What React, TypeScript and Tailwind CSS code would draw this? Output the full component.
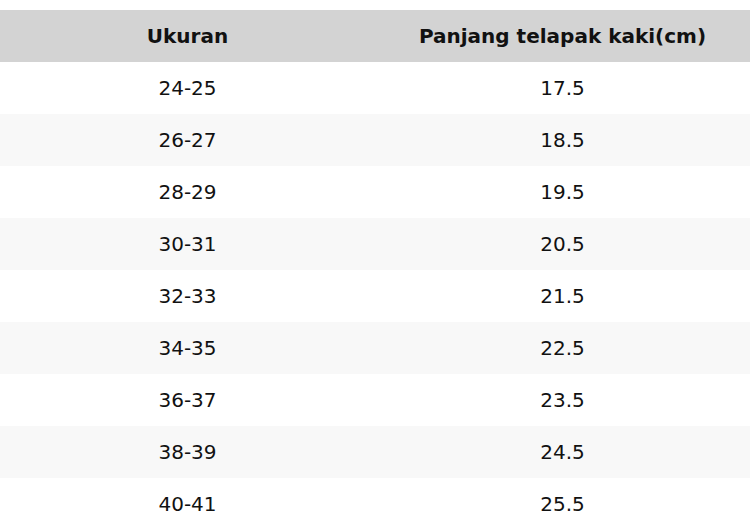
const rows = [
  ["24-25", "17.5"],
  ["26-27", "18.5"],
  ["28-29", "19.5"],
  ["30-31", "20.5"],
  ["32-33", "21.5"],
  ["34-35", "22.5"],
  ["36-37", "23.5"],
  ["38-39", "24.5"],
  ["40-41", "25.5"],
];

export default function App() {
  return (
    <div className="bg-white pt-[10px] text-[20px] text-[#111] [font-family:'DejaVu_Sans',sans-serif]">
      <table className="w-full border-collapse">
        <thead>
          <tr className="bg-[#d3d3d3]">
            <th className="h-[52px] w-1/2 p-0 text-center font-bold">Ukuran</th>
            <th className="h-[52px] w-1/2 p-0 text-center font-bold">Panjang telapak kaki(cm)</th>
          </tr>
        </thead>
        <tbody>
          {rows.map(([size, length], i) => (
            <tr key={size} className={i % 2 === 1 ? "bg-[#f8f8f8]" : "bg-white"}>
              <td className="h-[52px] p-0 text-center">{size}</td>
              <td className="h-[52px] p-0 text-center">{length}</td>
            </tr>
          ))}
        </tbody>
      </table>
    </div>
  );
}
